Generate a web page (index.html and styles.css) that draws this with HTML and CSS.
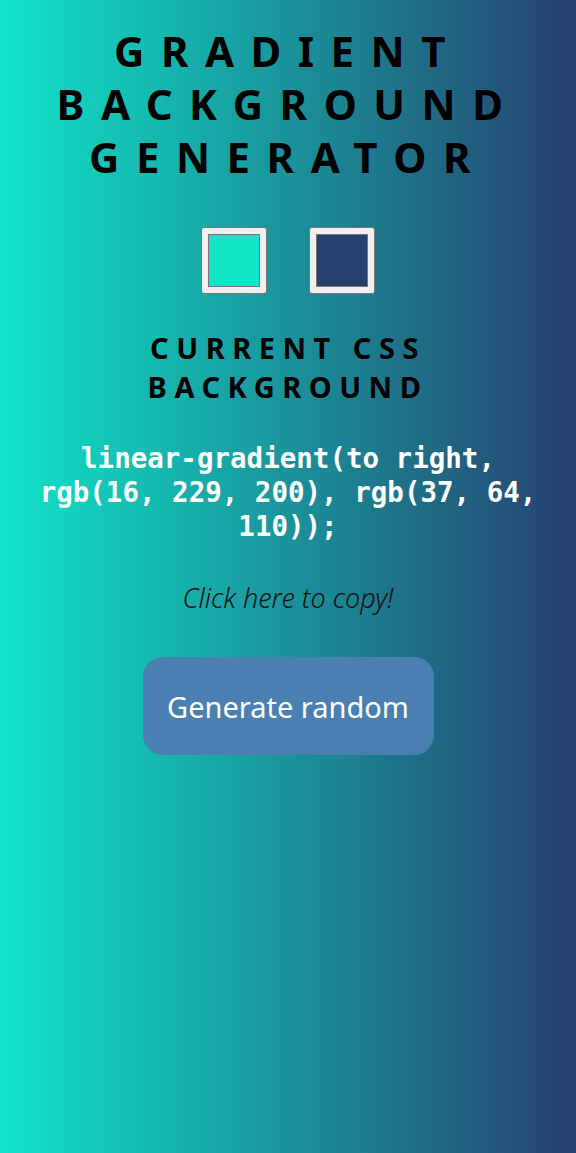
FILE: index.html
```html
<!DOCTYPE html>
<html>
<head>
<meta charset="utf-8">
<link rel="stylesheet" href="styles.css">
</head>
<body class="page">
  <h1 class="title">GRADIENT BACKGROUND GENERATOR</h1>
  <div class="pickers">
    <div class="picker"><span class="swatch swatch-a"></span></div>
    <div class="picker"><span class="swatch swatch-b"></span></div>
  </div>
  <h3 class="subtitle">CURRENT CSS BACKGROUND</h3>
  <p class="code">linear-gradient(to right, rgb(16, 229, 200), rgb(37, 64, 110));</p>
  <p class="copy">Click here to copy!</p>
  <button class="generate">Generate random</button>
</body>
</html>
```
FILE: styles.css
```css
html, body { margin: 0; padding: 0; }
.page {
  min-height: 1153px;
  background: linear-gradient(to right, rgb(16, 229, 200), rgb(37, 64, 110));
  text-align: center;
  font-family: "Noto Sans", "Open Sans", sans-serif;
  display: flex;
  flex-direction: column;
  align-items: center;
}
.title {
  margin: 24px 20px 0;
  font-size: 42px;
  line-height: 53px;
  font-weight: 700;
  letter-spacing: 16.5px;
  color: #000;
}
.pickers {
  display: flex;
  gap: 42px;
  margin-top: 44px;
}
.picker {
  width: 66px;
  height: 67px;
  box-sizing: border-box;
  padding: 6px;
  background: #efefef;
  border: 1px solid #767676;
  border-radius: 3px;
  display: flex;
}
.swatch {
  flex: 1;
  border: 1px solid #777;
}
.swatch-a { background: rgb(16, 229, 200); }
.swatch-b { background: rgb(37, 64, 110); }
.subtitle {
  margin: 34px 40px 0;
  font-size: 29px;
  line-height: 39px;
  font-weight: 700;
  letter-spacing: 7.5px;
  color: #000;
  max-width: 320px;
}
.code {
  margin: 35px 20px 0;
  font-family: "DejaVu Sans Mono", "Liberation Mono", monospace;
  font-weight: 700;
  font-size: 27.5px;
  line-height: 34px;
  color: #fff;
}
.copy {
  margin: 38px 0 0;
  font-style: italic;
  font-weight: 300;
  font-size: 27px;
  line-height: 34px;
  color: #111;
}
.generate {
  margin-top: 42px;
  width: 291px;
  height: 98px;
  border: none;
  border-radius: 20px;
  background: #4a80b1;
  color: #fff;
  font-family: "Noto Sans", "Open Sans", sans-serif;
  font-size: 29px;
}
```
